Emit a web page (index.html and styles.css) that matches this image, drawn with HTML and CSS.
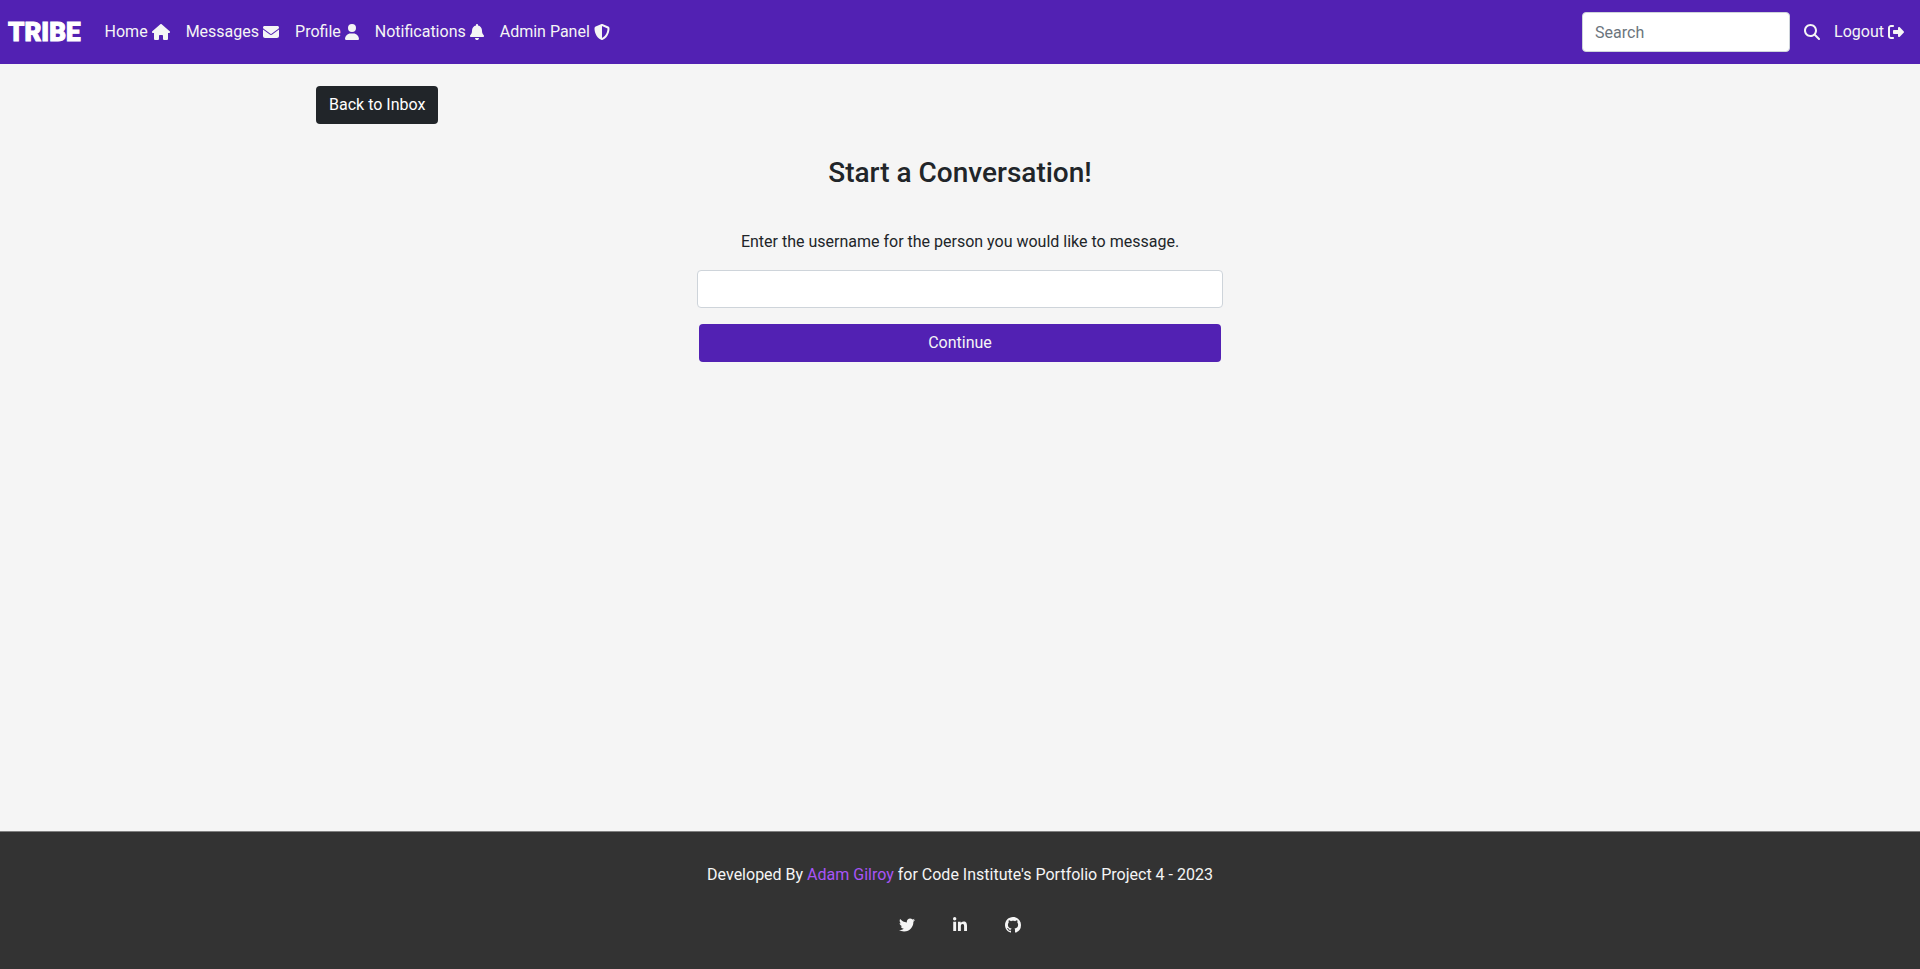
FILE: index.html
```html
<!DOCTYPE html>
<html lang="en">
<head>
<meta charset="utf-8">
<meta name="viewport" content="width=device-width, initial-scale=1">
<title>Tribe - New Message</title>
<link rel="stylesheet" href="styles.css">
</head>
<body>
<header class="navbar">
  <a class="brand" href="#">TRIBE</a>
  <nav class="nav-links" aria-label="Main">
    <a class="nav-link" href="#">Home <svg class="icon icon-wide" viewBox="0 0 576 512" aria-hidden="true"><path d="M575.8 255.5c0 18-15 32.1-32 32.1h-32l.7 160.2c0 2.7-.2 5.4-.5 8.1V472c0 22.1-17.9 40-40 40H456c-1.1 0-2.2 0-3.3-.1c-1.4 .1-2.8 .1-4.2 .1H416 392c-22.1 0-40-17.9-40-40V448 384c0-17.7-14.3-32-32-32H256c-17.7 0-32 14.3-32 32v64 24c0 22.1-17.9 40-40 40H160 128.1c-1.5 0-3-.1-4.5-.2c-1.2 .1-2.4 .2-3.6 .2H104c-22.1 0-40-17.9-40-40V360c0-.9 0-1.9 .1-2.8V287.6H32c-18 0-32-14-32-32.1c0-9 3-17 10-24L266.4 8c7-7 15-8 22-8s15 2 21 7L564.8 231.5c8 7 12 15 11 24z"/></svg></a>
    <a class="nav-link" href="#">Messages <svg class="icon" viewBox="0 0 512 512" aria-hidden="true"><path d="M48 64C21.5 64 0 85.5 0 112c0 15.1 7.1 29.3 19.2 38.4L236.8 313.6c11.4 8.5 27 8.5 38.4 0L492.8 150.4c12.1-9.1 19.2-23.3 19.2-38.4c0-26.5-21.5-48-48-48H48zM0 176V384c0 35.3 28.7 64 64 64H448c35.3 0 64-28.7 64-64V176L294.4 339.2c-22.8 17.1-54 17.1-76.8 0L0 176z"/></svg></a>
    <a class="nav-link" href="#">Profile <svg class="icon icon-narrow" viewBox="0 0 448 512" aria-hidden="true"><path d="M224 256A128 128 0 1 0 224 0a128 128 0 1 0 0 256zm-45.7 48C79.8 304 0 383.8 0 482.3C0 498.7 13.3 512 29.7 512H418.3c16.4 0 29.7-13.3 29.7-29.7C448 383.8 368.2 304 269.7 304H178.3z"/></svg></a>
    <a class="nav-link" href="#">Notifications <svg class="icon icon-narrow" viewBox="0 0 448 512" aria-hidden="true"><path d="M224 0c-17.7 0-32 14.3-32 32V51.2C119 66 64 130.6 64 208v18.8c0 47-17.3 92.4-48.5 127.6l-7.4 8.3c-8.4 9.4-10.4 22.9-5.3 34.4S19.4 416 32 416H416c12.6 0 24-7.4 29.2-18.9s3.1-25-5.3-34.4l-7.4-8.3C401.3 319.2 384 273.9 384 226.8V208c0-77.4-55-142-128-156.8V32c0-17.7-14.3-32-32-32zm45.3 493.3c12-12 18.7-28.3 18.7-45.3H224 160c0 17 6.7 33.3 18.7 45.3s28.3 18.7 45.3 18.7s33.3-6.7 45.3-18.7z"/></svg></a>
    <a class="nav-link" href="#">Admin Panel <svg class="icon" viewBox="0 0 512 512" aria-hidden="true"><path d="M256 0c4.6 0 9.2 1 13.4 2.9L457.7 82.8c22 9.3 38.4 31 38.3 57.2c-.5 99.2-41.3 280.7-213.6 363.2c-16.7 8-36.1 8-52.8 0C57.3 420.7 16.5 239.2 16 140c-.1-26.2 16.3-47.9 38.3-57.2L242.7 2.9C246.8 1 251.4 0 256 0zm0 66.8V444.8C394 378 431.1 230.1 432 141.4L256 66.8l0 0z"/></svg></a>
  </nav>
  <form class="search">
    <input class="field search-field" type="search" placeholder="Search" aria-label="Search">
    <button class="search-button" type="button" aria-label="Submit search"><svg class="icon" viewBox="0 0 512 512" aria-hidden="true"><path d="M416 208c0 45.9-14.9 88.3-40 122.7L502.6 457.4c12.5 12.5 12.5 32.8 0 45.3s-32.8 12.5-45.3 0L330.7 376c-34.4 25.2-76.8 40-122.7 40C93.1 416 0 322.9 0 208S93.1 0 208 0S416 93.1 416 208zM208 352a144 144 0 1 0 0-288 144 144 0 1 0 0 288z"/></svg></button>
  </form>
  <a class="nav-link" href="#">Logout <svg class="icon" viewBox="0 0 512 512" aria-hidden="true"><path d="M377.9 105.9L500.7 228.7c7.2 7.2 11.3 17.1 11.3 27.3s-4.1 20.1-11.3 27.3L377.9 406.1c-6.4 6.4-15 9.9-24 9.9c-18.7 0-33.9-15.2-33.9-33.9l0-62.1-128 0c-17.7 0-32-14.3-32-32l0-64c0-17.7 14.3-32 32-32l128 0 0-62.1c0-18.7 15.2-33.9 33.9-33.9c9 0 17.6 3.6 24 9.9zM160 96L96 96c-17.7 0-32 14.3-32 32l0 256c0 17.7 14.3 32 32 32l64 0c17.7 0 32 14.3 32 32s-14.3 32-32 32l-64 0c-53 0-96-43-96-96L0 128C0 75 43 32 96 32l64 0c17.7 0 32 14.3 32 32s-14.3 32-32 32z"/></svg></a>
</header>

<main class="content">
  <a class="button button-dark" href="#">Back to Inbox</a>
  <h1 class="title">Start a Conversation!</h1>
  <form class="message-form">
    <label class="form-label" for="username">Enter the username for the person you would like to message.</label>
    <input class="field" id="username" type="text">
    <button class="button button-primary" type="button">Continue</button>
  </form>
</main>

<footer class="footer">
  <p class="credit">Developed By <a class="credit-link" href="#">Adam Gilroy</a> for Code Institute's Portfolio Project 4 - 2023</p>
  <div class="socials">
    <a class="social" href="#" aria-label="Twitter"><svg class="icon" viewBox="0 0 512 512" aria-hidden="true"><path d="M459.37 151.716c.325 4.548.325 9.097.325 13.645 0 138.72-105.583 298.558-298.558 298.558-59.452 0-114.68-17.219-161.137-47.106 8.447.974 16.568 1.299 25.34 1.299 49.055 0 94.213-16.568 130.274-44.832-46.132-.975-84.792-31.188-98.112-72.772 6.498.974 12.995 1.624 19.818 1.624 9.421 0 18.843-1.3 27.614-3.573-48.081-9.747-84.143-51.98-84.143-102.985v-1.299c13.969 7.797 30.214 12.67 47.431 13.319-28.264-18.843-46.781-51.005-46.781-87.391 0-19.492 5.197-37.36 14.294-52.954 51.655 63.675 129.3 105.258 216.365 109.807-1.624-7.797-2.599-15.918-2.599-24.04 0-57.828 46.782-104.934 104.934-104.934 30.213 0 57.502 12.67 76.67 33.137 23.715-4.548 46.456-13.32 66.599-25.34-7.798 24.366-24.366 44.833-46.132 57.827 21.117-2.273 41.584-8.122 60.426-16.243-14.292 20.791-32.161 39.308-52.628 54.253z"/></svg></a>
    <a class="social" href="#" aria-label="LinkedIn"><svg class="icon" viewBox="-32 0 512 512" aria-hidden="true"><path d="M100.28 448H7.4V148.9h92.88zM53.79 108.1C24.09 108.1 0 83.5 0 53.8a53.79 53.79 0 0 1 107.58 0c0 29.7-24.1 54.3-53.79 54.3zM447.9 448h-92.68V302.4c0-34.7-.7-79.2-48.29-79.2-48.29 0-55.69 37.7-55.69 76.7V448h-92.78V148.9h89.08v40.8h1.3c12.4-23.5 42.69-48.3 87.88-48.3 94 0 111.28 61.9 111.28 142.3V448z"/></svg></a>
    <a class="social" href="#" aria-label="GitHub"><svg class="icon" viewBox="0 0 16 16" aria-hidden="true"><path d="M8 0C3.58 0 0 3.58 0 8c0 3.54 2.29 6.53 5.47 7.59.4.07.55-.17.55-.38 0-.19-.01-.82-.01-1.49-2.01.37-2.53-.49-2.69-.94-.09-.23-.48-.94-.82-1.13-.28-.15-.68-.52-.01-.53.63-.01 1.08.58 1.23.82.72 1.21 1.87.87 2.33.66.07-.52.28-.87.51-1.07-1.78-.2-3.64-.89-3.64-3.95 0-.87.31-1.59.82-2.15-.08-.2-.36-1.02.08-2.12 0 0 .67-.21 2.2.82.64-.18 1.32-.27 2-.27s1.36.09 2 .27c1.53-1.04 2.2-.82 2.2-.82.44 1.1.16 1.92.08 2.12.51.56.82 1.27.82 2.15 0 3.07-1.87 3.75-3.65 3.95.29.25.54.73.54 1.48 0 1.07-.01 1.93-.01 2.2 0 .21.15.46.55.38A8.01 8.01 0 0 0 16 8c0-4.42-3.58-8-8-8z"/></svg></a>
  </div>
</footer>
</body>
</html>
```
FILE: styles.css
```css
* {
  box-sizing: border-box;
}

body {
  display: flex;
  flex-direction: column;
  min-height: 100vh;
  margin: 0;
  background: #f5f5f5;
  color: #212529;
  font: 16px/24px Roboto, sans-serif;
}

a {
  color: inherit;
  text-decoration: none;
}

.icon {
  width: 16px;
  height: 16px;
  fill: currentColor;
}

.icon-wide {
  width: 18px;
}

.icon-narrow {
  width: 14px;
}

/* Navigation bar */
.navbar {
  display: flex;
  align-items: center;
  padding: 12px 16px 12px 8px;
  background: #5221b3;
  color: #f5f5f5;
}

.brand {
  margin-right: 24px;
  color: #fff;
  font-size: 26px;
  font-weight: 900;
  -webkit-text-stroke: 1px #fff;
}

.nav-links {
  display: flex;
  flex: 1;
  gap: 16px;
}

.nav-link {
  display: flex;
  align-items: center;
  gap: 4px;
  white-space: nowrap;
}

.search {
  display: flex;
  align-items: center;
}

.field {
  width: 100%;
  height: 38px;
  padding: 6px 12px;
  border: 1px solid #ced4da;
  border-radius: 4px;
  background: #fff;
  color: #212529;
  font: inherit;
}

.field::placeholder {
  color: #6c757d;
  opacity: 1;
}

.search-field {
  width: 208px;
  height: 40px;
}

.search-button {
  display: flex;
  padding: 12px 14px;
  border: 0;
  background: none;
  color: inherit;
}

/* Page content */
.content {
  display: flex;
  flex: 1;
  flex-direction: column;
  width: 100%;
  max-width: 1320px;
  margin: 0 auto;
  padding: 22px 16px;
}

.button {
  padding: 7px 13px;
  border: 0;
  border-radius: 4px;
  font: inherit;
  text-align: center;
}

.button-dark {
  align-self: flex-start;
  background: #212529;
  color: #fff;
}

.button-primary {
  margin: 0 2px;
  background: #5221b3;
  color: #f5f5f5;
}

.title {
  margin: 32px 0 40px;
  font-size: 28px;
  font-weight: 500;
  line-height: 34px;
  text-align: center;
}

.message-form {
  display: flex;
  flex-direction: column;
  gap: 16px;
  width: 100%;
  max-width: 526px;
  margin: 0 auto;
}

.form-label {
  text-align: center;
}

/* Footer */
.footer {
  display: flex;
  flex-direction: column;
  align-items: center;
  gap: 30px;
  padding: 31px 16px 36px;
  border-top: 1px solid #808080;
  background: #333;
  color: #f5f5f5;
}

.credit {
  margin: 0;
}

.credit-link {
  color: #a855f7;
}

.socials {
  display: flex;
  gap: 37px;
}

.social {
  display: flex;
}
```
